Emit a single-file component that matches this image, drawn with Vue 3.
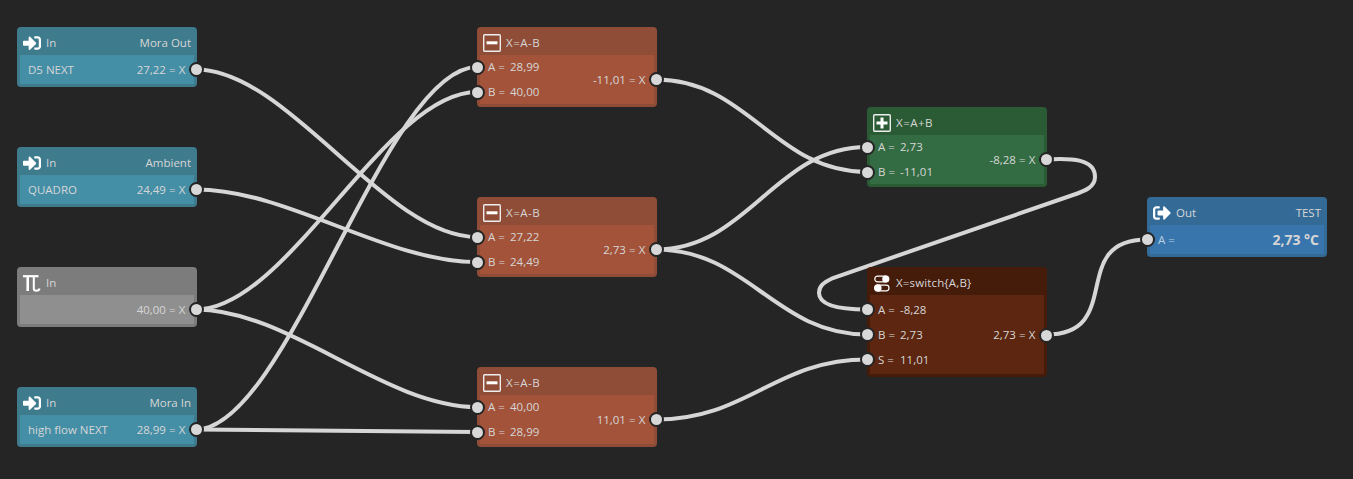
<script setup>
const nodes = [
  { id: 1, x: 17, y: 27, h: 60, theme: 'teal', icon: 'in', title: 'In', right: 'Mora Out', left: [{ text: 'D5 NEXT' }], out: '27,22' },
  { id: 2, x: 17, y: 147, h: 60, theme: 'teal', icon: 'in', title: 'In', right: 'Ambient', left: [{ text: 'QUADRO' }], out: '24,49' },
  { id: 3, x: 17, y: 267, h: 60, theme: 'gray', icon: 'pi', title: 'In', right: '', left: [{ text: '' }], out: '40,00' },
  { id: 4, x: 17, y: 387, h: 60, theme: 'teal', icon: 'in', title: 'In', right: 'Mora In', left: [{ text: 'high flow NEXT' }], out: '28,99' },
  { id: 5, x: 477, y: 27, h: 80, theme: 'orange', icon: 'minus', title: 'X=A-B', left: [{ k: 'A', v: '28,99' }, { k: 'B', v: '40,00' }], out: '-11,01' },
  { id: 6, x: 477, y: 197, h: 80, theme: 'orange', icon: 'minus', title: 'X=A-B', left: [{ k: 'A', v: '27,22' }, { k: 'B', v: '24,49' }], out: '2,73' },
  { id: 7, x: 477, y: 367, h: 80, theme: 'orange', icon: 'minus', title: 'X=A-B', left: [{ k: 'A', v: '40,00' }, { k: 'B', v: '28,99' }], out: '11,01' },
  { id: 8, x: 867, y: 107, h: 80, theme: 'green', icon: 'plus', title: 'X=A+B', left: [{ k: 'A', v: '2,73' }, { k: 'B', v: '-11,01' }], out: '-8,28' },
  { id: 9, x: 867, y: 267, h: 110, theme: 'brown', icon: 'switch', title: 'X=switch{A,B}', left: [{ k: 'A', v: '-8,28' }, { k: 'B', v: '2,73' }, { k: 'S', v: '11,01' }], out: '2,73' },
  { id: 10, x: 1147, y: 197, h: 60, theme: 'blue', icon: 'out', title: 'Out', right: 'TEST', left: [{ k: 'A', v: '' }], big: '2,73 °C' },
]

const curve = ([x1, y1], [x2, y2], d = 92) => `M${x1} ${y1} C${x1 + d} ${y1} ${x2 - d} ${y2} ${x2} ${y2}`

const wires = [
  curve([196, 69.5], [477, 237]),
  curve([196, 189.5], [477, 262]),
  curve([196, 309.5], [477, 92]),
  curve([196, 309.5], [477, 407]),
  curve([196, 429.5], [477, 67]),
  curve([196, 429.5], [477, 432]),
  curve([656, 79.5], [867, 172]),
  curve([656, 249.5], [867, 147]),
  curve([656, 249.5], [867, 334.5]),
  curve([656, 419.5], [867, 359.5]),
  curve([1046, 334.5], [1147, 239.5], 80),
  'M1046 159.5 C1072 158 1095 159 1095 177 C1095 187 1085 191 1073 195 L833 278 C822 283 819 287 819 293 C819 305 838 309.5 867 309.5',
]
</script>

<template>
  <div class="canvas">
    <svg class="wires" width="1353" height="479" viewBox="0 0 1353 479">
      <path v-for="(d, i) in wires" :key="i" :d="d" />
    </svg>

    <div
      v-for="n in nodes"
      :key="n.id"
      class="node"
      :class="n.theme"
      :style="{ left: n.x + 'px', top: n.y + 'px', height: n.h + 'px' }"
    >
      <header class="head">
        <svg class="icon" width="18" height="18" viewBox="0 0 18 18">
          <g v-if="n.icon === 'in'" transform="scale(0.0352)">
            <path fill="#fff" d="M416 448h-84c-6.6 0-12-5.4-12-12v-40c0-6.6 5.4-12 12-12h84c17.7 0 32-14.3 32-32V160c0-17.7-14.3-32-32-32h-84c-6.6 0-12-5.4-12-12V76c0-6.6 5.4-12 12-12h84c53 0 96 43 96 96v192c0 53-43 96-96 96zm-47-201L201 79c-15-15-41-4.5-41 17v96H24c-13.3 0-24 10.7-24 24v96c0 13.3 10.7 24 24 24h136v96c0 21.5 26 32 41 17l168-168c9.3-9.4 9.3-24.6 0-34z" />
          </g>
          <g v-else-if="n.icon === 'out'" transform="scale(0.0352)">
            <path fill="#fff" d="M497 273L329 441c-15 15-41 4.5-41-17v-96H152c-13.3 0-24-10.7-24-24v-96c0-13.3 10.7-24 24-24h136V88c0-21.4 25.9-32 41-17l168 168c9.3 9.4 9.3 24.6 0 34zM192 436v-40c0-6.6-5.4-12-12-12H96c-17.7 0-32-14.3-32-32V160c0-17.7 14.3-32 32-32h84c6.6 0 12-5.4 12-12V76c0-6.6-5.4-12-12-12H96c-53 0-96 43-96 96v192c0 53 43 96 96 96h84c6.6 0 12-5.4 12-12z" />
          </g>
          <g v-else-if="n.icon === 'pi'" fill="none" stroke="#fff">
            <path stroke-width="2.2" d="M0 2.2H15.5" />
            <path stroke-width="2.6" d="M4.7 2.5V17" />
            <path stroke-width="2" d="M10.8 2.5V14.5C10.8 16.2 12 16.7 13.3 16.7C15 16.7 16.3 15.9 16.6 14.5" />
          </g>
          <g v-else-if="n.icon === 'minus'">
            <rect x="0.7" y="0.7" width="16.6" height="16.6" rx="1" fill="none" stroke="#eee" stroke-width="1.4" />
            <rect x="3.5" y="7.3" width="11" height="3" fill="#fff" />
          </g>
          <g v-else-if="n.icon === 'plus'">
            <rect x="0.7" y="0.7" width="16.6" height="16.6" rx="1" fill="none" stroke="#eee" stroke-width="1.4" />
            <rect x="3.5" y="7.5" width="11" height="3" fill="#fff" />
            <rect x="7.5" y="3.5" width="3" height="11" fill="#fff" />
          </g>
          <g v-else-if="n.icon === 'switch'">
            <rect x="1.8" y="2.2" width="13.5" height="5.6" rx="2.8" fill="none" stroke="#fff" stroke-width="1.2" />
            <circle cx="12.8" cy="5" r="3.6" fill="#fff" />
            <rect x="2.5" y="11.2" width="13.5" height="5.6" rx="2.8" fill="none" stroke="#fff" stroke-width="1.2" />
            <circle cx="4.8" cy="14" r="3.8" fill="#fff" />
          </g>
        </svg>
        <span class="title">{{ n.title }}</span>
        <span v-if="n.right" class="right">{{ n.right }}</span>
      </header>

      <div class="body">
        <div class="inputs">
          <div v-for="(row, i) in n.left" :key="i" class="row">
            <template v-if="row.k">
              <i class="port port-in"></i>
              <span class="key">{{ row.k }} =</span>
              <span v-if="row.v">{{ row.v }}</span>
            </template>
            <span v-else>{{ row.text }}</span>
          </div>
        </div>
        <div v-if="n.out" class="output">
          <span>{{ n.out }} = X</span>
          <i class="port port-out"></i>
        </div>
        <div v-if="n.big" class="big">{{ n.big }}</div>
      </div>
    </div>
  </div>
</template>

<style scoped>
.canvas {
  position: relative;
  width: 1353px;
  height: 479px;
  overflow: hidden;
  background: #252525;
  font-family: "Open Sans", "Noto Sans", sans-serif;
  font-size: 11.5px;
  color: #d6d6d6;
}
.wires {
  position: absolute;
  left: 0;
  top: 0;
}
.wires path {
  fill: none;
  stroke: #d6d6d6;
  stroke-width: 4;
}
.node {
  position: absolute;
  box-sizing: border-box;
  width: 180px;
  display: flex;
  flex-direction: column;
  padding: 0 3px 3px;
  border-radius: 4px;
  background: var(--frame);
}
.head {
  flex: 0 0 28px;
  box-sizing: border-box;
  display: flex;
  align-items: center;
  padding: 3px 3px 0;
  height: 28px;
}
.icon {
  flex: none;
  margin-right: 5px;
}
.right {
  margin-left: auto;
}
.orange .title,
.green .title {
  letter-spacing: 0.5px;
}
.brown .title {
  letter-spacing: 0.15px;
}
.body {
  flex: 1;
  min-height: 0;
  position: relative;
  display: flex;
  justify-content: space-between;
  align-items: center;
  padding: 0 8.5px 0 8px;
  background: var(--fill);
}
.inputs {
  display: flex;
  flex-direction: column;
}
.row {
  display: flex;
  align-items: center;
  height: 25px;
}
.orange .row span,
.green .row span {
  margin-bottom: 2px;
}
.key {
  width: 22px;
  white-space: nowrap;
}
.output span {
  word-spacing: 0.2px;
}
.port {
  position: absolute;
  box-sizing: border-box;
  width: 15px;
  height: 15px;
  border: 2px solid #252525;
  border-radius: 50%;
  background: #d8d8d8;
}
.port-in {
  left: -10px;
}
.port-out {
  right: -10px;
  top: 50%;
  margin-top: -8px;
}
.brown .port-out {
  margin-top: -7px;
}
.big {
  font-size: 14px;
  font-weight: 700;
  margin-right: -3.5px;
}
.teal { --frame: #3e7b8d; --fill: #448ea6; }
.gray { --frame: #7c7c7c; --fill: #8f8f8f; }
.orange { --frame: #8f4c37; --fill: #a2533a; }
.green { --frame: #2b5b34; --fill: #336c42; }
.brown { --frame: #451b0a; --fill: #5c2610; }
.blue { --frame: #336a96; --fill: #3975ad; }
.blue .key { color: #b8d0e0; }
</style>
